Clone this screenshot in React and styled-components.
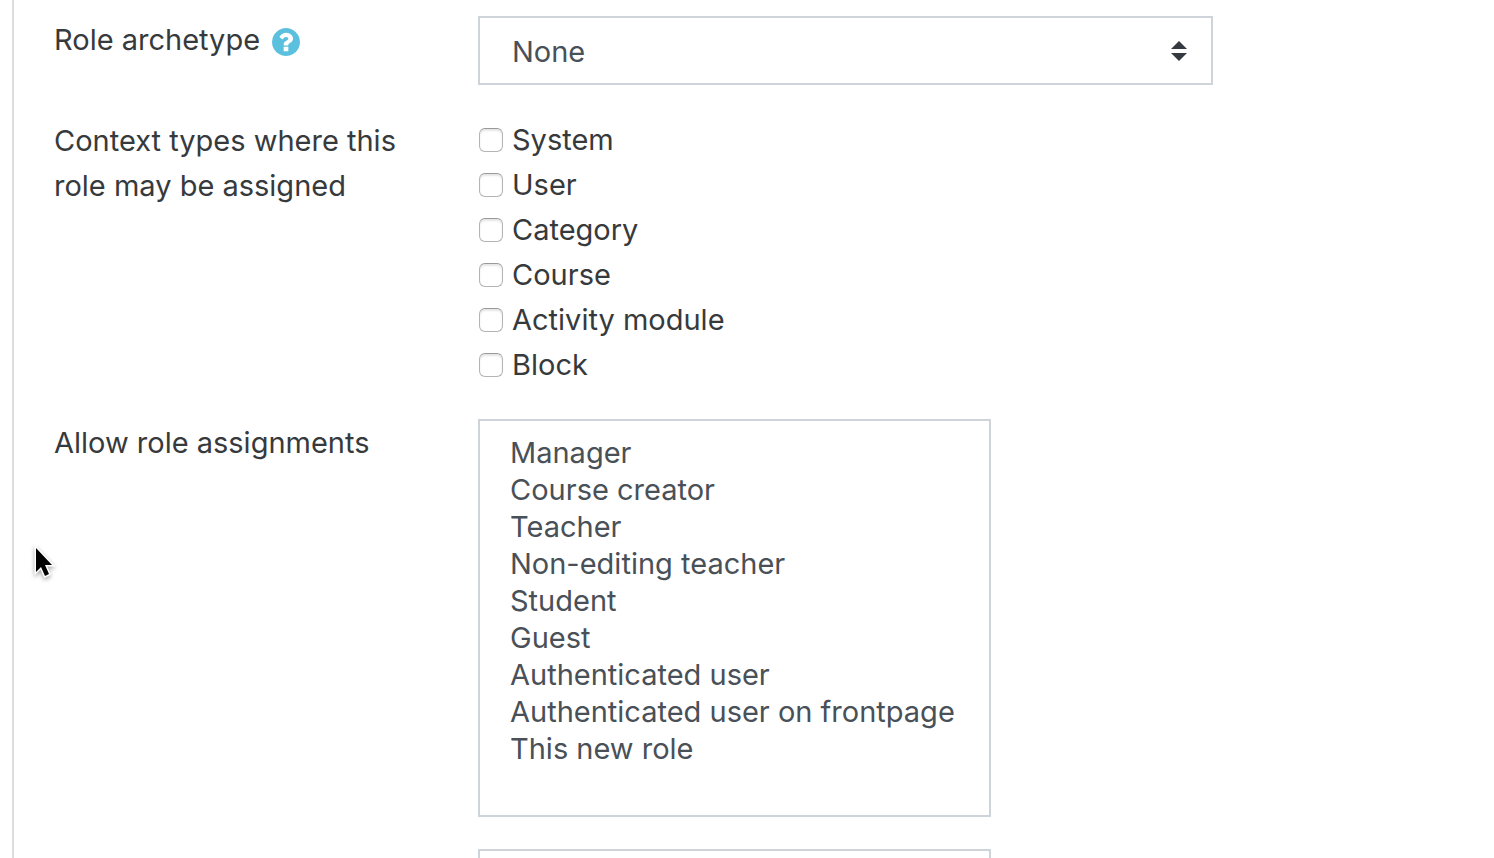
import React from "react";
import styled, { createGlobalStyle } from "styled-components";

const GlobalStyle = createGlobalStyle`
  *, *::before, *::after { box-sizing: border-box; }
  body {
    margin: 0;
    background: #fff;
    color: #373a3c;
    font-family: Inter, "Liberation Sans", sans-serif;
    font-size: 29px;
    line-height: 45px;
  }
`;

const Page = styled.main`
  position: relative;
  height: 100vh;
  overflow: hidden;
  padding-left: 12px;
`;

const Form = styled.form`
  display: flex;
  flex-direction: column;
  gap: 32px;
  min-height: 100%;
  padding: 16px 24px 32px 40px;
  border-left: 2px solid #ddd;
`;

const Row = styled.div`
  display: grid;
  grid-template-columns: 364px minmax(0, 1fr);
  column-gap: 60px;
  align-items: start;
`;

const LabelCell = styled.div`
  display: flex;
  align-items: center;
  gap: 12px;
  padding-top: 1px;
`;

const HelpButton = styled.button`
  display: flex;
  padding: 5px 0 0;
  border: 0;
  background: none;
  color: #5bc0de;
  cursor: pointer;
`;

const SelectWrap = styled.div`
  position: relative;
  width: 735px;
  max-width: 100%;
`;

const Select = styled.select`
  display: block;
  appearance: none;
  width: 100%;
  padding: 11px 60px 9px 32px;
  border: 2px solid #ced4da;
  border-radius: 0;
  background: #fff;
  color: #495057;
  font: inherit;
`;

const Caret = styled.svg`
  position: absolute;
  top: 25px;
  right: 26px;
  pointer-events: none;
`;

const CheckList = styled.div`
  display: flex;
  flex-direction: column;
  align-items: flex-start;
`;

const CheckLabel = styled.label`
  display: flex;
  align-items: center;
  gap: 9px;
  padding-left: 1px;
`;

const Checkbox = styled.input`
  appearance: none;
  width: 24px;
  height: 24px;
  margin: 0;
  border: 1px solid #b4b4b4;
  border-top-color: #999;
  border-radius: 6px;
  background: #fff;
  box-shadow: inset 0 2px 2px #e6e6e6;

  &:checked { background: #5bc0de; }
`;

const ListBox = styled.select`
  display: block;
  width: 513px;
  max-width: 100%;
  height: 398px;
  padding: 14px 24px 10px;
  border: 2px solid #ced4da;
  border-radius: 0;
  background: #fff;
  color: #495057;
  font: inherit;
  line-height: 37px;
  overflow: hidden;
`;

const Option = styled.option`
  height: 37px;
  padding: 0 6px;
  line-height: 37px;
`;

const Pointer = styled.svg`
  position: absolute;
  left: 30px;
  top: 542px;
  pointer-events: none;
  filter: drop-shadow(0 2px 2px rgba(0, 0, 0, 0.35));
`;

const contexts = ["System", "User", "Category", "Course", "Activity module", "Block"];

const roles = [
  "Manager",
  "Course creator",
  "Teacher",
  "Non-editing teacher",
  "Student",
  "Guest",
  "Authenticated user",
  "Authenticated user on frontpage",
  "This new role",
];

function HelpIcon() {
  return (
    <svg width="28" height="28" viewBox="128 128 1536 1536" fill="currentColor" aria-hidden="true">
      <path d="M1024 1376v-192q0-14-9-23t-23-9h-192q-14 0-23 9t-9 23v192q0 14 9 23t23 9h192q14 0 23-9t9-23zm256-672q0-88-55.5-163t-138.5-116-170-41q-243 0-371 213-15 24 8 42l132 100q7 6 19 6 16 0 25-12 53-68 86-92 34-24 86-24 48 0 85.5 26t37.5 59q0 38-20 61t-68 45q-63 28-115.5 86.5t-52.5 125.5v36q0 14 9 23t23 9h192q14 0 23-9t9-23q0-19 21.5-49.5t54.5-49.5q32-18 49-28.5t46-35 44.5-48 28-60.5 12.5-81zm384 192q0 209-103 385.5t-279.5 279.5-385.5 103-385.5-103-279.5-279.5-103-385.5 103-385.5 279.5-279.5 385.5-103 385.5 103 279.5 279.5 103 385.5z" />
    </svg>
  );
}

export default function App() {
  return (
    <>
      <GlobalStyle />
      <Page>
        <Form>
          <Row>
            <LabelCell>
              <label htmlFor="archetype">Role archetype</label>
              <HelpButton type="button" aria-label="Help with role archetype">
                <HelpIcon />
              </HelpButton>
            </LabelCell>
            <SelectWrap>
              <Select id="archetype" defaultValue="None">
                <option>None</option>
              </Select>
              <Caret width="16" height="20" viewBox="0 0 16 20" fill="#343a40" aria-hidden="true">
                <path d="M8 0L16 8H0zM0 12H16L8 20z" />
              </Caret>
            </SelectWrap>
          </Row>

          <Row role="group" aria-labelledby="contexts-label">
            <LabelCell id="contexts-label">Context types where this role may be assigned</LabelCell>
            <CheckList>
              {contexts.map((name) => (
                <CheckLabel key={name}>
                  <Checkbox type="checkbox" name="context" value={name} />
                  {name}
                </CheckLabel>
              ))}
            </CheckList>
          </Row>

          <Row>
            <LabelCell>
              <label htmlFor="assignments">Allow role assignments</label>
            </LabelCell>
            <ListBox id="assignments" multiple size={10}>
              {roles.map((role) => (
                <Option key={role}>{role}</Option>
              ))}
            </ListBox>
          </Row>

          <Row>
            <LabelCell />
            <ListBox multiple size={10} aria-label="Allow role overrides" />
          </Row>
        </Form>

        <Pointer width="28" height="40" viewBox="0 0 28 40" aria-hidden="true">
          <path
            d="M6 6V30L11 25L15 34L19 32L15 23H22z"
            fill="#000"
            stroke="#fff"
            strokeWidth="3"
            paintOrder="stroke"
          />
        </Pointer>
      </Page>
    </>
  );
}
